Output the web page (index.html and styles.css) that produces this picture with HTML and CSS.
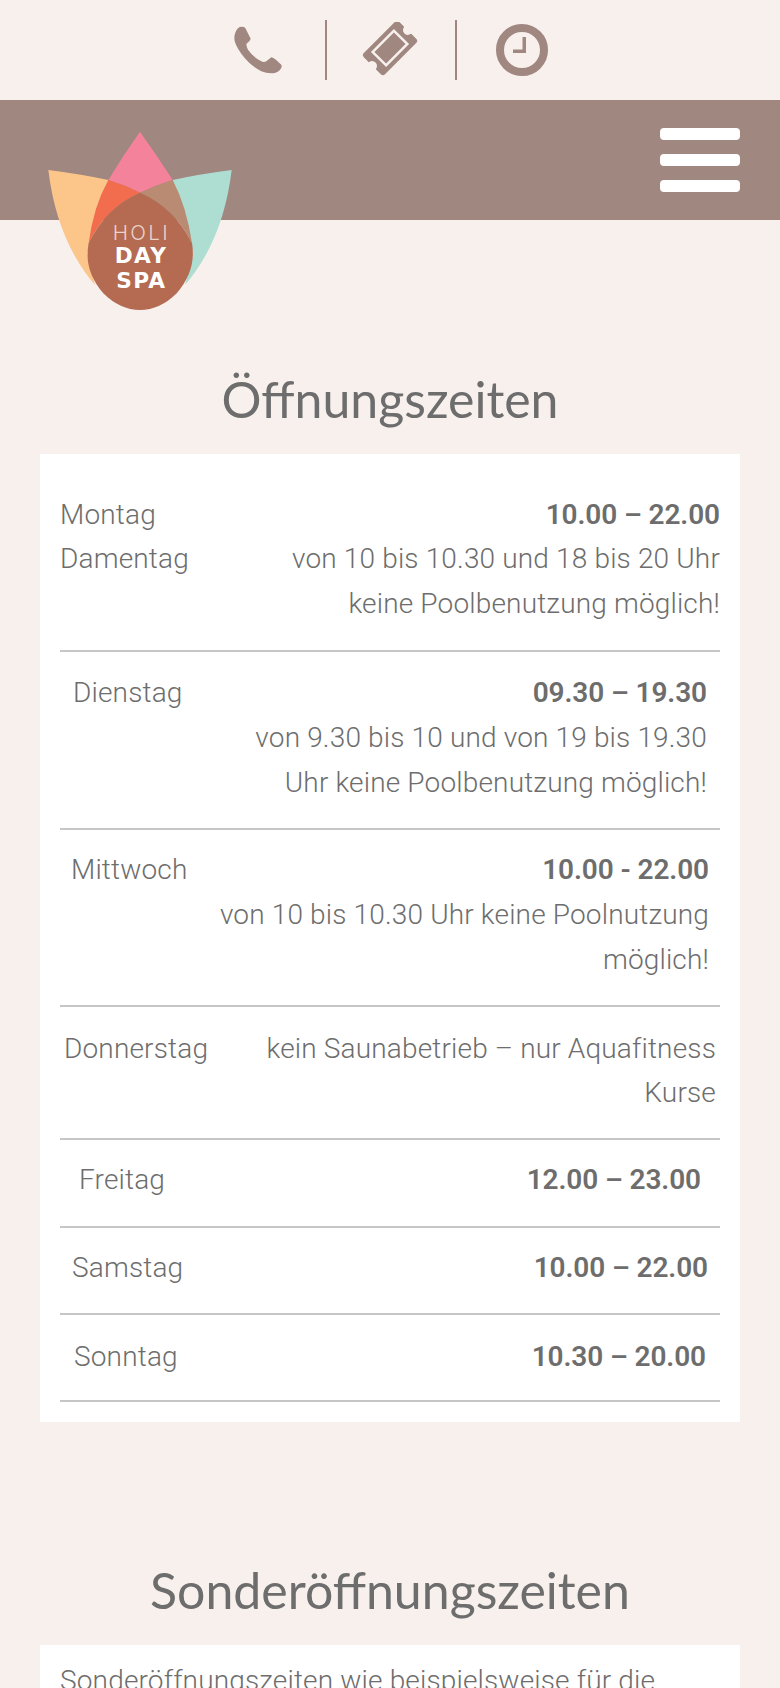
FILE: index.html
```html
<!DOCTYPE html>
<html lang="de">
<head>
    <meta charset="UTF-8">
    <title>Öffnungszeiten</title>
    <link rel="stylesheet" href="styles.css">
</head>
<body>
    <div class="top-icons">
        <a class="top-icon" href="#">
            <svg width="48" height="48" viewBox="0 0 48 48">
                <path class="fill" d="M5.700 1Q9.500 .2 11.300 2L16.700 12.700Q16 15.500 12.300 18Q12.500 21 14 23.700Q19 31 27.300 35.300Q30 36.500 32.300 35.300L37.300 31.300Q39 30.800 47.300 38.700Q48 40 47.300 42Q45 46 40.700 47Q34 48 27.300 45.300Q17 40 10.700 32Q3 23 .7 15.300Q0 11 .7 8.700Q2 3 5.700 1Z"/>
            </svg>
        </a>
        <span class="divider divider-first"></span>
        <a class="top-icon" href="#">
            <svg width="56" height="56" viewBox="0 0 56 56">
                <g transform="translate(0 -2) rotate(-45 28 28)">
                    <path class="fill" d="M6 13H50Q53 13 53 16V23Q48.500 24 48.500 28Q48.500 32 53 33V40Q53 43 50 43H6Q3 43 3 40V33Q7.500 32 7.500 28Q7.500 24 3 23V16Q3 13 6 13Z"/>
                    <rect class="ticket-line" x="13" y="18.500" width="30" height="19"/>
                </g>
            </svg>
        </a>
        <span class="divider divider-second"></span>
        <a class="top-icon" href="#">
            <svg width="52" height="52" viewBox="0 0 52 52">
                <circle class="clock-ring" cx="26" cy="26" r="22"/>
                <path class="fill" d="M26.500 13H30V29H17V25.500H26.500Z"/>
            </svg>
        </a>
    </div>

    <div class="bar">
        <svg class="logo" width="240" height="230" viewBox="0 0 720 690">
            <path fill="#fcc58a" d="M55 210Q150 222 235 240L172 460L195 555Q80 420 55 210Z"/>
            <path fill="#aeddd2" d="M605 210Q510 222 428 240L490 460L465 555Q580 420 605 210Z"/>
            <path fill="#f5829b" d="M330 95Q280 165 235 240Q285 255 330 278Q380 255 428 240Q380 165 330 95Z"/>
            <path fill="#f26d4e" d="M235 240Q285 255 330 278Q225 325 176 430Q190 320 235 240Z"/>
            <path fill="#b98b72" d="M428 240Q380 255 330 278Q435 325 486 430Q470 320 428 240Z"/>
            <path fill="#b56a52" d="M330 278Q225 325 176 430Q160 510 220 580Q270 630 330 630Q390 630 440 580Q500 510 486 430Q435 325 330 278Z"/>
            <text class="logo-light" x="334" y="420">HOLI</text>
            <text class="logo-bold" x="333" y="490">DAY</text>
            <text class="logo-bold" x="334" y="565">SPA</text>
        </svg>
        <div class="burger">
            <span></span>
            <span></span>
            <span></span>
        </div>
    </div>

    <h2 class="title title-first">Öffnungszeiten</h2>
    <div class="card times">
        <div class="row row-1">
            <div>Montag<br>Damentag</div>
            <div class="hours"><strong>10.00 – 22.00</strong><br>von 10 bis 10.30 und 18 bis 20 Uhr<br>keine Poolbenutzung möglich!</div>
        </div>
        <div class="row row-2">
            <div>Dienstag</div>
            <div class="hours"><strong>09.30 – 19.30</strong><br>von 9.30 bis 10 und von 19 bis 19.30<br>Uhr keine Poolbenutzung möglich!</div>
        </div>
        <div class="row row-3">
            <div>Mittwoch</div>
            <div class="hours"><strong>10.00 - 22.00</strong><br>von 10 bis 10.30 Uhr keine Poolnutzung<br>möglich!</div>
        </div>
        <div class="row row-4">
            <div>Donnerstag</div>
            <div class="hours">kein Saunabetrieb – nur Aquafitness<br>Kurse</div>
        </div>
        <div class="row row-5">
            <div>Freitag</div>
            <div class="hours"><strong>12.00 – 23.00</strong></div>
        </div>
        <div class="row row-6">
            <div>Samstag</div>
            <div class="hours"><strong>10.00 – 22.00</strong></div>
        </div>
        <div class="row row-7">
            <div>Sonntag</div>
            <div class="hours"><strong>10.30 – 20.00</strong></div>
        </div>
    </div>

    <h2 class="title title-second">Sonderöffnungszeiten</h2>
    <div class="card note">
        Sonderöffnungszeiten wie beispielsweise für die
    </div>
</body>
</html>
```

FILE: styles.css
```css
html, body{
    margin: 0;
    height: 1688px;
    overflow: hidden;
}
body{
    background-color: #f7f0ed;
    color: #6d6d6d;
    font-family: "Roboto", "Liberation Sans", sans-serif;
    font-weight: 300;
    font-size: 28px;
    line-height: 44.8px;
    letter-spacing: 0.16px;
}
.top-icons{
    height: 100px;
    padding-left: 2px;
    display: flex;
    align-items: center;
    justify-content: center;
}
.top-icon{
    display: flex;
    align-items: center;
}
.fill{
    fill: #a08780;
}
.ticket-line{
    fill: none;
    stroke: #f7f0ed;
    stroke-width: 2.5px;
}
.clock-ring{
    fill: none;
    stroke: #a08780;
    stroke-width: 8px;
}
.divider{
    width: 2px;
    height: 60px;
    background-color: #a08780;
}
.divider-first{
    margin: 0 35px 0 43px;
}
.divider-second{
    margin: 0 39px 0 37px;
}
.bar{
    height: 120px;
    position: relative;
    background-color: #a08780;
}
.logo{
    position: absolute;
    left: 30px;
    top: 0;
}
.logo text{
    text-anchor: middle;
}
.logo-light{
    font-family: "Inter", "Liberation Sans", sans-serif;
    font-size: 62px;
    font-weight: 300;
    letter-spacing: 7px;
    fill: #e9d3ca;
}
.logo-bold{
    font-family: "DejaVu Sans", "Liberation Sans", sans-serif;
    font-size: 65px;
    font-weight: 700;
    letter-spacing: 4px;
    fill: #fff;
}
.burger{
    position: absolute;
    right: 40px;
    top: 28px;
    display: flex;
    flex-direction: column;
    gap: 14px;
}
.burger span{
    display: block;
    width: 80px;
    height: 12px;
    border-radius: 4px;
    background-color: #fff;
}
.title{
    margin: 0;
    text-align: center;
    font-family: "Lato", "Liberation Sans", sans-serif;
    font-weight: 400;
    font-size: 50px;
    line-height: 60px;
    letter-spacing: 0;
}
.title-first{
    padding-top: 149px;
    height: 85px;
}
.title-second{
    padding-top: 138px;
    height: 85px;
}
.card{
    margin: 0 40px;
    padding: 0 20px;
    background-color: #fff;
}
.times{
    padding-top: 38.700px;
    padding-bottom: 20px;
}
.row{
    display: flex;
    justify-content: space-between;
    padding-top: 18.700px;
    padding-bottom: 22.300px;
    border-bottom: 2px solid #c6c6c6;
}
.row:first-child{
    padding-top: 0;
    padding-bottom: 23.300px;
}
.hours{
    text-align: right;
}
.hours strong{
    font-weight: 600;
    letter-spacing: -0.1px;
}
.row-2{ padding-left: 13px; padding-right: 13px; }
.row-3{ padding-left: 11px; padding-right: 11px; }
.row-4{ padding: 19.500px 4px 21.500px; }
.row-5{ padding-left: 19px; padding-right: 19px; }
.row-6{ padding-left: 12px; padding-right: 12px; }
.row-7{ padding: 20px 14px; }
.note{
    padding-top: 14px;
    height: 100px;
}
```
